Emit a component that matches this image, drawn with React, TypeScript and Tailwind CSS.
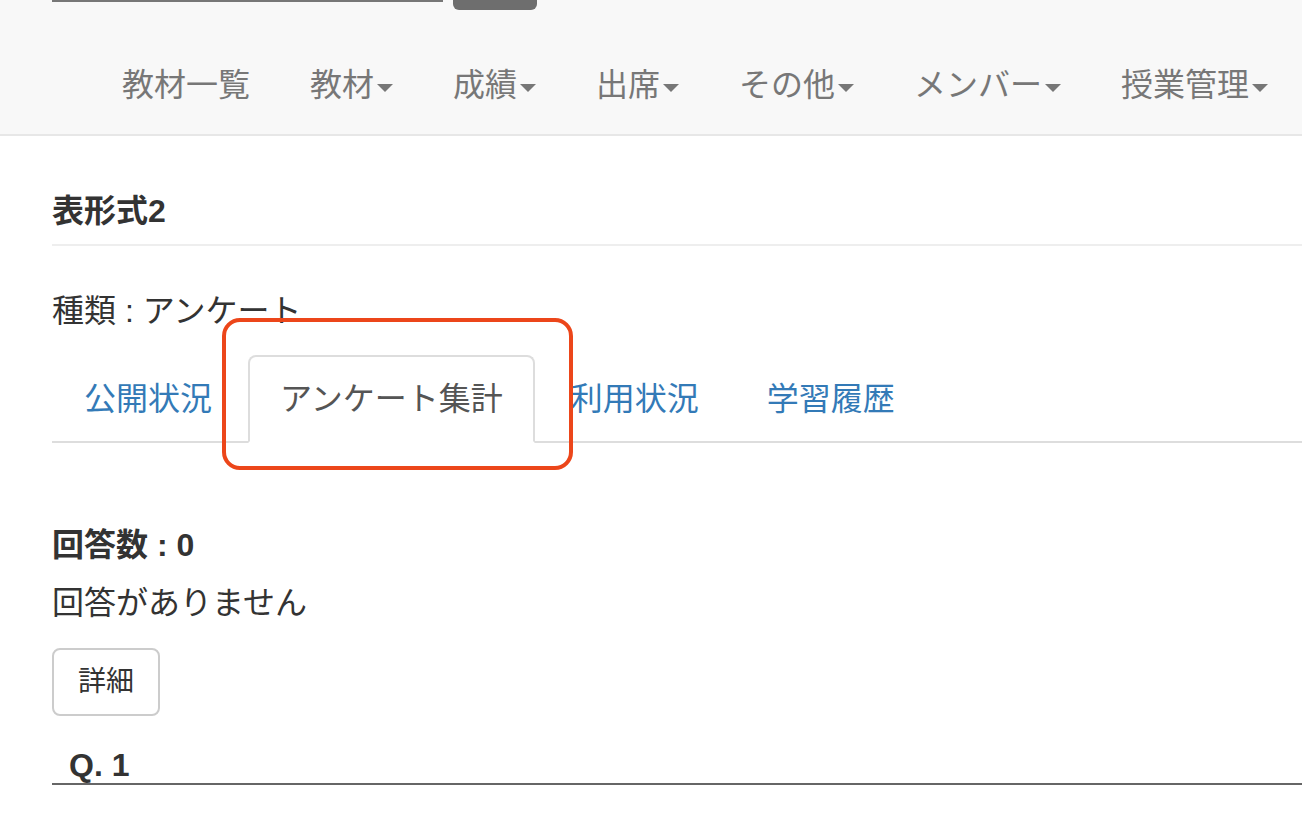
import React from "react";

const navItems = [
  { label: "教材一覧", caret: false },
  { label: "教材", caret: true },
  { label: "成績", caret: true },
  { label: "出席", caret: true },
  { label: "その他", caret: true },
  { label: "メンバー", caret: true },
  { label: "授業管理", caret: true },
];

const tabs = ["公開状況", "アンケート集計", "利用状況", "学習履歴"];

const Caret = () => (
  <span className="ml-[3px] inline-block h-0 w-0 border-x-[8px] border-t-[8px] border-x-transparent border-t-[#777] align-middle" />
);

export default function App() {
  return (
    <div
      className="relative min-h-[832px] w-[1302px] overflow-hidden bg-white text-[#333]"
      style={{ fontFamily: '"Liberation Sans", "Noto Sans CJK JP", sans-serif' }}
    >
      {/* navbar */}
      <div className="h-[136px] border-b-2 border-[#e7e7e7] bg-[#f8f8f8]">
        <div className="ml-[52px] flex items-start">
          <div className="h-[2px] w-[391px] bg-[#777]" />
          <div className="ml-[10px] h-[10px] w-[84px] rounded-b-[6px] bg-[#6e6e6e]" />
        </div>
        <ul className="ml-[92px] mt-[25px] flex">
          {navItems.map((item) => (
            <li
              key={item.label}
              className="px-[30px] py-[30px] text-[32px] leading-[40px] text-[#777]"
            >
              {item.label}
              {item.caret && <Caret />}
            </li>
          ))}
        </ul>
      </div>

      {/* content */}
      <div className="pl-[52px]">
        <div className="mt-[52px] border-b-2 border-[#eee] pb-[10px]">
          <h4 className="text-[32px] font-bold leading-[46px]">表形式2</h4>
        </div>

        <p className="mt-[42px] text-[32px] leading-[46px]">種類 : アンケート</p>

        <ul className="mt-[21px] flex border-b-2 border-[#ddd]">
          {tabs.map((t, i) => (
            <li key={t} className="-mb-[2px] mr-[4px]">
              <span
                className={
                  i === 1
                    ? "block rounded-t-[8px] border-2 border-[#ddd] border-b-white bg-white px-[30px] py-[20px] text-[32px] leading-[44px] text-[#555]"
                    : "block rounded-t-[8px] border-2 border-transparent px-[30px] py-[20px] text-[32px] leading-[44px] text-[#337ab7]"
                }
              >
                {t}
              </span>
            </li>
          ))}
        </ul>

        <p className="mt-[79px] text-[32px] font-bold leading-[46px]">回答数 : 0</p>
        <p className="mt-[12px] text-[32px] leading-[46px]">回答がありません</p>

        <button className="mt-[22px] block rounded-[8px] border-2 border-[#ccc] bg-white px-[24px] py-[12px] text-[28px] leading-[40px] text-[#333]">
          詳細
        </button>

        <div className="mt-[31px] border-b-2 border-[#666] pl-[17px]">
          <span className="text-[32px] font-bold leading-[36px]">Q. 1</span>
        </div>
      </div>

      {/* annotation */}
      <div className="pointer-events-none absolute left-[222px] top-[318px] h-[152px] w-[351px] rounded-[18px] border-4 border-[#ec461a]" />
    </div>
  );
}
